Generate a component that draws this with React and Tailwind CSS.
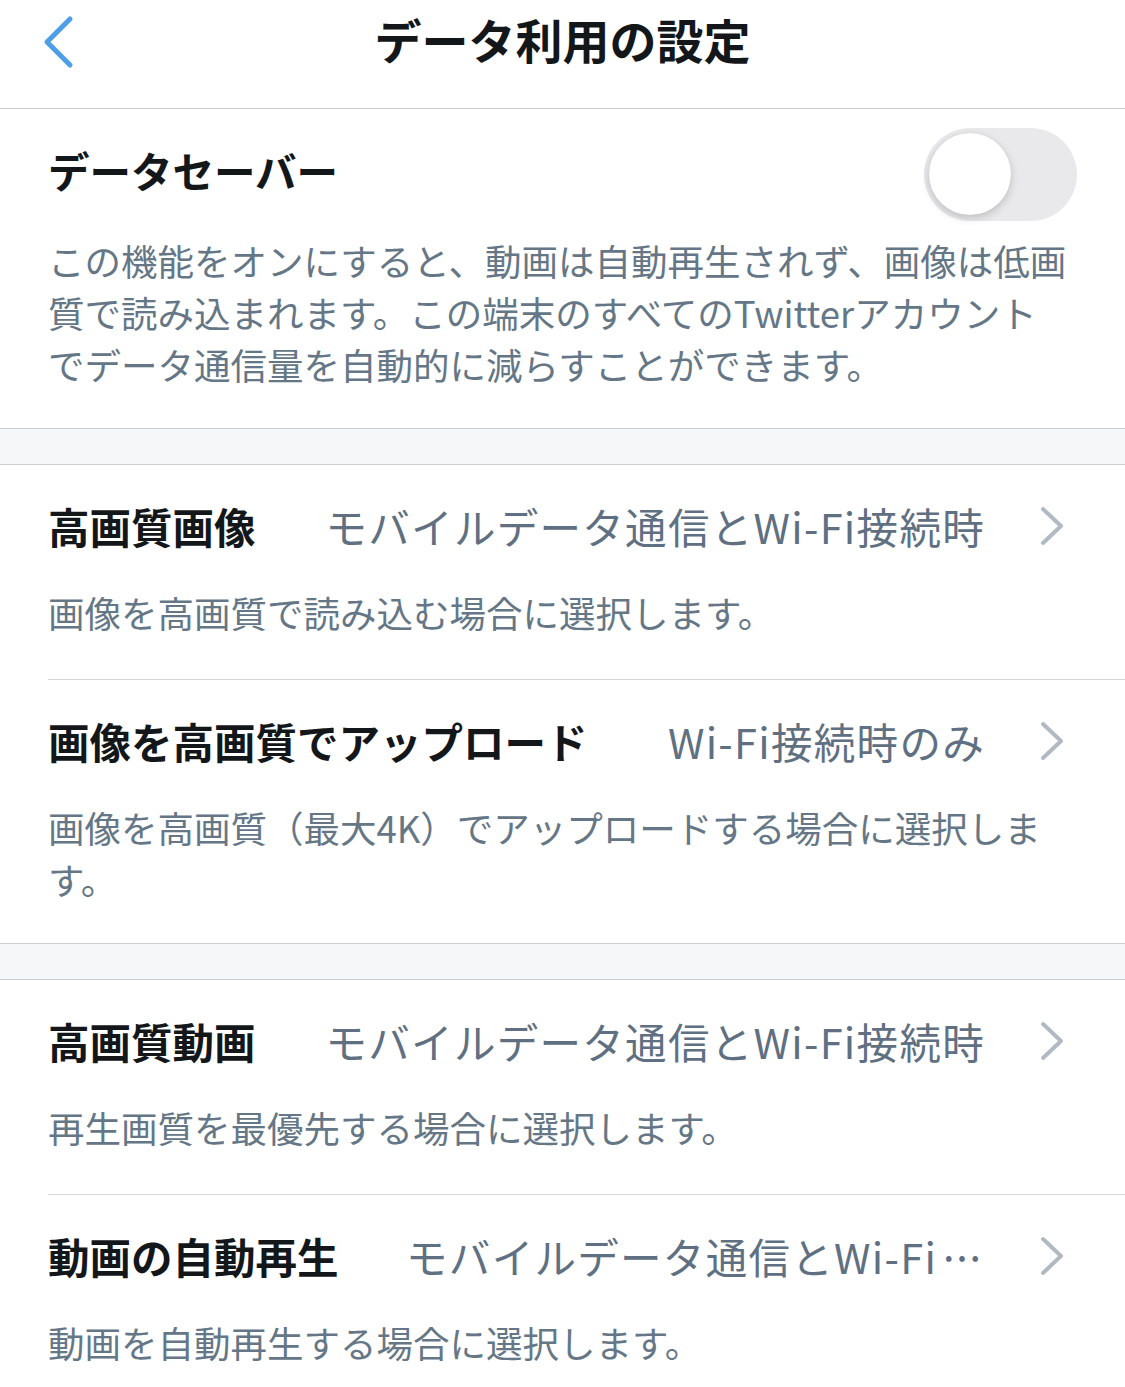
import React from "react";

const FONT = { fontFamily: '"Noto Sans CJK JP", "Noto Sans", sans-serif' };

function Chevron() {
  return (
    <svg width="24" height="40" viewBox="0 0 24 40" className="shrink-0">
      <polyline points="3,3 21,20 3,37" fill="none" stroke="#b1bac3" strokeWidth="4" strokeLinecap="round" strokeLinejoin="round" />
    </svg>
  );
}

function Row({ label, value, desc, divider }) {
  return (
    <div className="pl-[48px]">
      <div className={"pt-[35px] pr-[61px] " + (divider ? "pb-[40px] border-b border-[#d3d7db]" : "pb-[37px]")}>
        <div className="flex items-center h-[52px]">
          <div className="shrink-0 whitespace-nowrap text-[41.5px] font-bold text-[#14171a] leading-[52px]">{label}</div>
          <div className="flex-1 min-w-0 ml-[60px] text-right whitespace-nowrap text-[41.5px] tracking-[1.3px] text-[#5f7082] leading-[52px]">
            {value}
          </div>
          <div className="ml-[55px]"><Chevron /></div>
        </div>
        <div className="mt-[35px] text-[36.5px] leading-[52px] text-[#657786]">
          {desc.map((l, i) => (
            <div key={i} className="whitespace-nowrap">{l}</div>
          ))}
        </div>
      </div>
    </div>
  );
}

function Band() {
  return <div className="h-[37px] bg-[#f5f7f9] border-y border-[#c9ced4]" />;
}

export default function App() {
  return (
    <div style={FONT} className="w-[1125px] h-[1387px] overflow-hidden bg-white">
      {/* header */}
      <div className="h-[109px] border-b border-[#c9c9cb]">
        <div className="relative h-[84px] flex items-center justify-center">
          <svg width="40" height="56" viewBox="0 0 40 56" className="absolute left-[38px] top-[14px]">
            <polyline points="32,5 9,28 32,51" fill="none" stroke="#4c9fe8" strokeWidth="5" strokeLinecap="round" strokeLinejoin="round" />
          </svg>
          <div className="text-[47px] font-bold text-[#14171a] leading-none -mt-[7px]">データ利用の設定</div>
        </div>
      </div>

      {/* data saver */}
      <div className="pt-[19px] pb-[37px] pl-[48px] pr-[48px]">
        <div className="flex items-center justify-between h-[92px]">
          <div className="text-[41.5px] font-bold text-[#14171a] leading-none -mt-[6px]">データセーバー</div>
          <div className="w-[153px] h-[93px] rounded-full bg-[#e9e9eb] p-[5px] flex items-center">
            <div className="w-[82px] h-[82px] rounded-full bg-white shadow-[0_3px_8px_rgba(0,0,0,0.18),0_0_1px_rgba(0,0,0,0.12)]" />
          </div>
        </div>
        <div className="mt-[15px] text-[36.5px] leading-[52px] text-[#657786]">
          <div className="whitespace-nowrap">この機能をオンにすると、動画は自動再生されず、画像は低画</div>
          <div className="whitespace-nowrap">質で読み込まれます。この端末のすべてのTwitterアカウント</div>
          <div className="whitespace-nowrap">でデータ通信量を自動的に減らすことができます。</div>
        </div>
      </div>

      <Band />

      <Row
        label="高画質画像"
        value="モバイルデータ通信とWi-Fi接続時"
        desc={["画像を高画質で読み込む場合に選択します。"]}
        divider
      />
      <Row
        label="画像を高画質でアップロード"
        value="Wi-Fi接続時のみ"
        desc={["画像を高画質（最大4K）でアップロードする場合に選択しま", "す。"]}
      />

      <Band />

      <Row
        label="高画質動画"
        value="モバイルデータ通信とWi-Fi接続時"
        desc={["再生画質を最優先する場合に選択します。"]}
        divider
      />
      <Row
        label="動画の自動再生"
        value={<>モバイルデータ通信とWi-Fi<span className="tracking-[-10px] pr-[8px]">···</span></>}
        desc={["動画を自動再生する場合に選択します。"]}
      />
    </div>
  );
}
